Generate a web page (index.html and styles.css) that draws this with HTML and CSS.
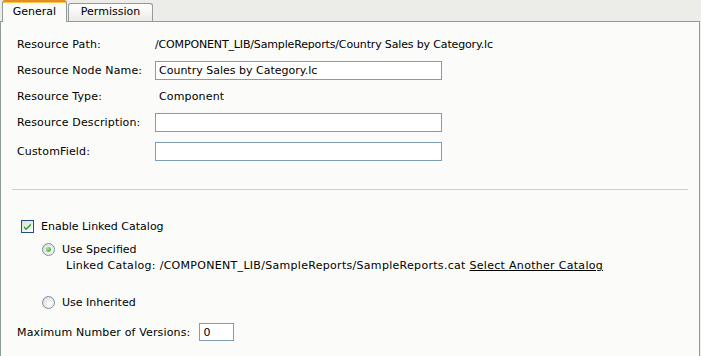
FILE: index.html
```html
<html>
<head>
  <link rel="stylesheet" href="styles.css">
</head>
<body>
<div class="tabs">
  <div class="tab active">General</div>
  <div class="tab">Permission</div>
</div>
<div class="panel">
  <div class="row first">
    <span class="label">Resource Path:</span>
    <span class="value">/COMPONENT_LIB/SampleReports/Country Sales by Category.lc</span>
  </div>
  <div class="row">
    <span class="label">Resource Node Name:</span>
    <input class="field" type="text" value="Country Sales by Category.lc">
  </div>
  <div class="row">
    <span class="label">Resource Type:</span>
    <span class="value type">Component</span>
  </div>
  <div class="row">
    <span class="label">Resource Description:</span>
    <input class="field" type="text" value="">
  </div>
  <div class="row last">
    <span class="label">CustomField:</span>
    <input class="field" type="text" value="">
  </div>

  <div class="divider"></div>

  <div class="check-row">
    <span class="checkbox">
      <svg width="13" height="13" viewBox="0 0 13 13"><path d="M3 6 L5 8.2 L10 3.2 L10 5.2 L5 10.2 L3 8 Z" fill="#21A121"/></svg>
    </span>
    <span>Enable Linked Catalog</span>
  </div>
  <div class="radio-row">
    <span class="radio on"><span class="dot"></span></span>
    <span>Use Specified</span>
  </div>
  <div class="linked">Linked Catalog: /COMPONENT_LIB/SampleReports/SampleReports.cat <a class="link">Select Another Catalog</a></div>
  <div class="radio-row second">
    <span class="radio"></span>
    <span>Use Inherited</span>
  </div>
  <div class="versions">
    <span>Maximum Number of Versions:</span>
    <input class="small" type="text" value="0">
  </div>
</div>
</body>
</html>
```

FILE: styles.css
```css
body{
    margin: 0;
    width: 701px;
    background: #ECECE9;
    font-family: "DejaVu Sans", Verdana, sans-serif;
    font-size: 11px;
    color: #000;
}
.tabs{
    display: flex;
    align-items: flex-end;
    height: 21px;
    padding-left: 2px;
}
.tab{
    height: 17px;
    line-height: 16px;
    width: 83px;
    text-align: center;
    border: 1px solid #919B9C;
    border-bottom: none;
    border-radius: 3px 3px 0 0;
    background: linear-gradient(#FFFFFF, #ECEBE6);
    margin-left: 1px;
}
.tab.active{
    position: relative;
    z-index: 1;
    width: 63px;
    height: 20px;
    line-height: 20px;
    margin-left: 0;
    margin-bottom: -1px;
    border-top: 2px solid #E68B2C;
    box-shadow: inset 0 1px 0 #FFC73C;
    background: #FBFCF9;
}
.panel{
    width: 698px;
    height: 332px;
    border: 1px solid #919B9C;
    background: #FBFCF9;
    padding-top: 9px;
    box-sizing: content-box;
}
.row{
    display: flex;
    align-items: center;
    height: 26px;
    padding-left: 16px;
}
.row.last{
    margin-top: 3px;
}
.label{
    width: 138px;
    letter-spacing: 0.15px;
}
.value{
    letter-spacing: -0.15px;
}
.value.type{
    padding-left: 4px;
    letter-spacing: 0.15px;
}
.field{
    width: 287px;
    height: 19px;
    box-sizing: border-box;
    border: 1px solid #7F9DB9;
    padding: 0 3px;
    font-family: "DejaVu Sans", Verdana, sans-serif;
    font-size: 11px;
    background: #FFFFFF;
    outline: none;
}
.divider{
    margin: 25px 11px 0 11px;
    height: 1px;
    background: #C9D2D6;
}
.check-row{
    display: flex;
    align-items: center;
    margin-top: 29px;
    padding-left: 20px;
    height: 14px;
    gap: 7px;
}
.checkbox{
    width: 11px;
    height: 11px;
    border: 1px solid #1C5180;
    background: linear-gradient(135deg, #DCDCD7, #FFFFFF);
    display: flex;
}
.checkbox svg{
    margin: -1px;
}
.radio-row{
    display: flex;
    align-items: center;
    gap: 7px;
    padding-left: 41px;
    height: 14px;
    margin-top: 9px;
}
.radio-row.second{
    margin-top: 22px;
}
.radio{
    width: 11px;
    height: 11px;
    border: 1px solid #7A8EA6;
    border-radius: 50%;
    background: radial-gradient(circle at 65% 65%, #FFFFFF, #D5D5CF);
    display: flex;
    align-items: center;
    justify-content: center;
}
.dot{
    width: 5px;
    height: 5px;
    border-radius: 50%;
    background: radial-gradient(circle at 35% 35%, #A0EA8C, #21A121);
}
.linked{
    padding-left: 65px;
    margin-top: 3px;
    height: 14px;
    line-height: 14px;
    letter-spacing: 0.3px;
}
.link{
    text-decoration: underline;
    cursor: pointer;
}
.versions{
    display: flex;
    align-items: center;
    gap: 9px;
    padding-left: 16px;
    margin-top: 14px;
    letter-spacing: 0.15px;
}
.small{
    width: 35px;
    height: 18px;
    box-sizing: border-box;
    border: 1px solid #7F9DB9;
    padding: 0 3px;
    font-family: "DejaVu Sans", Verdana, sans-serif;
    font-size: 11px;
    background: #FFFFFF;
    outline: none;
}
```
